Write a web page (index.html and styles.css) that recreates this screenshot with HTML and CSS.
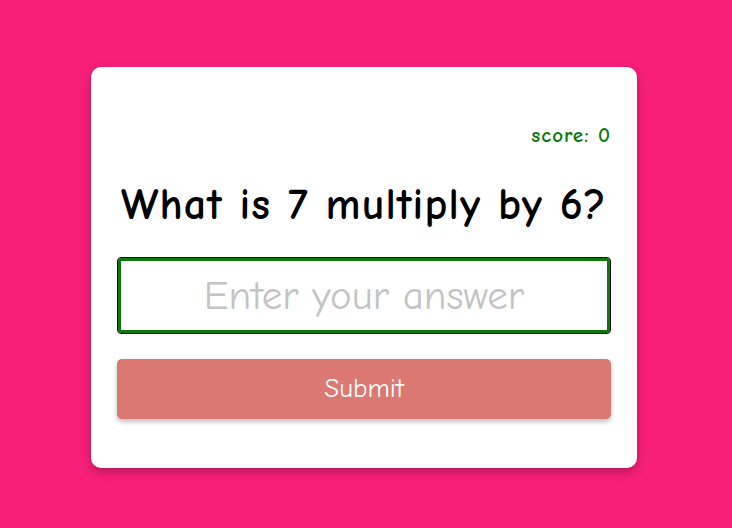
FILE: index.html
```html
<!DOCTYPE html>
<html lang="en">
<head>
<meta charset="utf-8">
<title>Multiply quiz</title>
<link rel="stylesheet" href="styles.css">
</head>
<body>
<form class="card" onsubmit="return false">
  <p class="score">score: 0</p>
  <h1 class="question">What is 7 multiply by 6?</h1>
  <input class="answer" type="text" placeholder="Enter your answer" autofocus>
  <button class="submit" type="submit">Submit</button>
</form>
</body>
</html>
```
FILE: styles.css
```css
* { box-sizing: border-box; }
html, body { margin: 0; height: 100%; }
body {
  background: #f71f78;
  display: flex;
  align-items: center;
  justify-content: center;
  font-family: "Comic Sans MS", "Comic Neue", "DejaVu Sans", sans-serif;
  padding: 6px 4px 0 0;
}
.card {
  width: 546px;
  background: #fff;
  border-radius: 10px;
  box-shadow: 0 4px 10px rgba(0,0,0,0.25);
  padding: 54px 26px 49px;
  display: flex;
  flex-direction: column;
}
.score {
  margin: 0;
  text-align: right;
  color: #0a7a0a;
  font-weight: bold;
  font-size: 21px;
  letter-spacing: 1px;
  line-height: 28px;
}
.question {
  margin: 26px 0 22px;
  text-align: center;
  font-size: 44px;
  letter-spacing: 1.1px;
  line-height: 60px;
  font-weight: bold;
  color: #000;
}
.answer {
  width: 100%;
  height: 77px;
  border: 1px solid #111;
  box-shadow: inset 0 0 0 3px #0b7a0b;
  outline: none;
  border-radius: 4px;
  text-align: center;
  font-family: inherit;
  font-size: 41px;
  color: #333;
  caret-color: #0b7a0b;
}
.answer::placeholder { color: #c4c4c4; }
.submit {
  margin-top: 25px;
  height: 60px;
  border: none;
  border-radius: 5px;
  background: #db7871;
  color: #fff;
  font-family: inherit;
  font-size: 27px;
  box-shadow: 0 3px 5px rgba(0,0,0,0.25);
}
```
